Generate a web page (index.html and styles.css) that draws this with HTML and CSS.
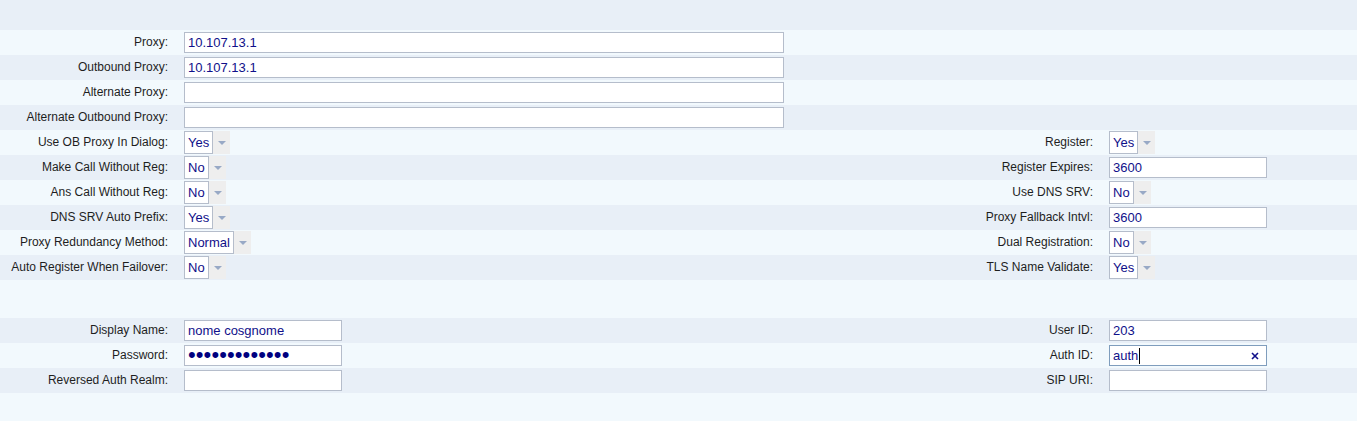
FILE: index.html
```html
<!DOCTYPE html>
<html lang="en">
<head>
  <meta charset="UTF-8">
  <title>SIP Account Settings</title>
  <link rel="stylesheet" href="styles.css">
</head>
<body>
  <div class="page">
    <div class="band"></div>

    <!-- Proxy settings -->
    <div class="row">
      <label class="label">Proxy:</label>
      <div class="cell"><div class="field wide">10.107.13.1</div></div>
    </div>
    <div class="row alt">
      <label class="label">Outbound Proxy:</label>
      <div class="cell"><div class="field wide">10.107.13.1</div></div>
    </div>
    <div class="row">
      <label class="label">Alternate Proxy:</label>
      <div class="cell"><div class="field wide"></div></div>
    </div>
    <div class="row alt">
      <label class="label">Alternate Outbound Proxy:</label>
      <div class="cell"><div class="field wide"></div></div>
    </div>

    <div class="row">
      <label class="label">Use OB Proxy In Dialog:</label>
      <div class="cell"><div class="combo"><span class="combo-text">Yes</span><span class="trigger"></span></div></div>
      <label class="label">Register:</label>
      <div class="cell"><div class="combo"><span class="combo-text">Yes</span><span class="trigger"></span></div></div>
    </div>
    <div class="row alt">
      <label class="label">Make Call Without Reg:</label>
      <div class="cell"><div class="combo"><span class="combo-text">No</span><span class="trigger"></span></div></div>
      <label class="label">Register Expires:</label>
      <div class="cell"><div class="field">3600</div></div>
    </div>
    <div class="row">
      <label class="label">Ans Call Without Reg:</label>
      <div class="cell"><div class="combo"><span class="combo-text">No</span><span class="trigger"></span></div></div>
      <label class="label">Use DNS SRV:</label>
      <div class="cell"><div class="combo"><span class="combo-text">No</span><span class="trigger"></span></div></div>
    </div>
    <div class="row alt">
      <label class="label">DNS SRV Auto Prefix:</label>
      <div class="cell"><div class="combo"><span class="combo-text">Yes</span><span class="trigger"></span></div></div>
      <label class="label">Proxy Fallback Intvl:</label>
      <div class="cell"><div class="field">3600</div></div>
    </div>
    <div class="row">
      <label class="label">Proxy Redundancy Method:</label>
      <div class="cell"><div class="combo"><span class="combo-text">Normal</span><span class="trigger"></span></div></div>
      <label class="label">Dual Registration:</label>
      <div class="cell"><div class="combo"><span class="combo-text">No</span><span class="trigger"></span></div></div>
    </div>
    <div class="row alt">
      <label class="label">Auto Register When Failover:</label>
      <div class="cell"><div class="combo"><span class="combo-text">No</span><span class="trigger"></span></div></div>
      <label class="label">TLS Name Validate:</label>
      <div class="cell"><div class="combo"><span class="combo-text">Yes</span><span class="trigger"></span></div></div>
    </div>

    <div class="spacer"></div>

    <!-- Account -->
    <div class="row alt">
      <label class="label">Display Name:</label>
      <div class="cell"><div class="field">nome cosgnome</div></div>
      <label class="label">User ID:</label>
      <div class="cell"><div class="field">203</div></div>
    </div>
    <div class="row">
      <label class="label">Password:</label>
      <div class="cell"><div class="field"><span class="dots">•••••••••••••</span></div></div>
      <label class="label">Auth ID:</label>
      <div class="cell">
        <div class="field focused">auth<span class="caret"></span>
          <svg class="clear" width="8" height="8" viewBox="0 0 8 8"><path d="M1 1L7 7M7 1L1 7"/></svg>
        </div>
      </div>
    </div>
    <div class="row alt">
      <label class="label">Reversed Auth Realm:</label>
      <div class="cell"><div class="field"></div></div>
      <label class="label">SIP URI:</label>
      <div class="cell"><div class="field"></div></div>
    </div>
  </div>
</body>
</html>
```

FILE: styles.css
```css
body {
  margin: 0;
  font-family: "Liberation Sans", Arial, sans-serif;
  background-color: #f2f9fd;
  color: #1e1e1e;
}

.band {
  height: 30px;
  background-color: #e8eff7;
}

.row {
  display: grid;
  grid-template-columns: 176px 1fr 200px 256px;
  height: 25px;
}

.row.alt {
  background-color: #e8eff7;
}

.spacer {
  height: 38px;
}

.label {
  font-size: 12px;
  line-height: 25px;
  text-align: right;
  padding-right: 8px;
  white-space: nowrap;
}

.cell {
  padding-left: 8px;
}

.field {
  position: relative;
  box-sizing: border-box;
  width: 158px;
  height: 21px;
  margin-top: 2px;
  padding: 0 3px;
  background-color: white;
  border: 1px solid #b5bdcb;
  color: #10108a;
  font-size: 13px;
  line-height: 19px;
  white-space: nowrap;
}

.field.wide {
  width: 600px;
}

.field.focused {
  border-color: #7f9dbd;
}

.caret {
  display: inline-block;
  width: 1px;
  height: 16px;
  margin-left: 1px;
  background-color: #000;
  vertical-align: -4px;
}

.clear {
  position: absolute;
  right: 7px;
  top: 6px;
  stroke: #10108a;
  stroke-width: 1.6;
}

.dots {
  font-size: 22px;
  letter-spacing: 0.1px;
  line-height: 19px;
  color: #00007f;
  position: relative;
  top: -1px;
}

.combo {
  display: inline-flex;
  height: 23px;
  margin-top: 1px;
}

.combo-text {
  box-sizing: border-box;
  height: 23px;
  padding: 0 3px;
  background-color: white;
  border: 1px solid #b5bdcb;
  color: #10108a;
  font-size: 13px;
  line-height: 21px;
}

.trigger {
  position: relative;
  width: 17px;
  height: 23px;
  background-color: #eeeeee;
}

.trigger::after {
  content: "";
  position: absolute;
  left: 5px;
  top: 10px;
  border-left: 4px solid transparent;
  border-right: 4px solid transparent;
  border-top: 4px solid #98a9c6;
}
```
